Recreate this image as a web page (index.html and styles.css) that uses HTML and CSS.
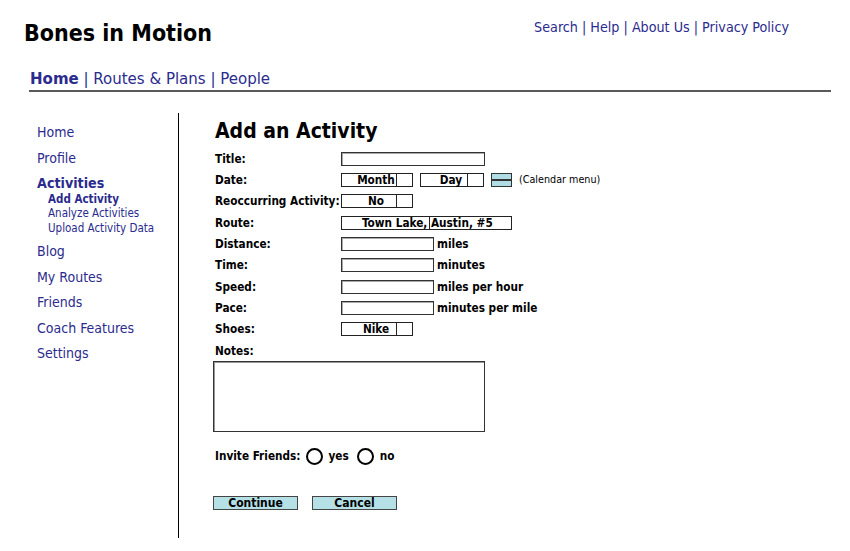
FILE: index.html
```html
<!DOCTYPE html>
<html>
<head>
<meta charset="utf-8">
<title>Bones in Motion</title>
<link rel="stylesheet" href="styles.css">
</head>
<body>
<header class="top">
  <div class="brand">Bones in Motion</div>
  <div class="util"><a>Search</a> | <a>Help</a> | <a>About Us</a> | <a>Privacy Policy</a></div>
</header>
<nav class="tabs"><a class="cur">Home</a> | <a>Routes &amp; Plans</a> | <a>People</a></nav>
<div class="rule"></div>
<div class="main">
  <aside class="side">
    <a class="item">Home</a>
    <a class="item">Profile</a>
    <a class="item cur">Activities</a>
    <div class="sub">
      <a class="cur">Add Activity</a>
      <a>Analyze Activities</a>
      <a>Upload Activity Data</a>
    </div>
    <a class="item">Blog</a>
    <a class="item">My Routes</a>
    <a class="item">Friends</a>
    <a class="item">Coach Features</a>
    <a class="item">Settings</a>
  </aside>
  <section class="content">
    <h1>Add an Activity</h1>
    <div class="form">
      <div class="lbl">Title:</div>
      <div class="ctl"><span class="inp wide"></span></div>

      <div class="lbl">Date:</div>
      <div class="ctl">
        <span class="select month"><span class="val">Month</span><span class="arr"></span></span>
        <span class="select day"><span class="val">Day</span><span class="arr"></span></span>
        <span class="cal"></span>
        <span class="note">(Calendar menu)</span>
      </div>

      <div class="lbl">Reoccurring Activity:</div>
      <div class="ctl"><span class="select small"><span class="val">No</span><span class="arr"></span></span></div>

      <div class="lbl">Route:</div>
      <div class="ctl"><span class="select route"><span class="val">Town Lake, Austin, #5</span><span class="arr"></span></span></div>

      <div class="lbl">Distance:</div>
      <div class="ctl"><span class="inp num"></span><span class="unit">miles</span></div>

      <div class="lbl">Time:</div>
      <div class="ctl"><span class="inp num"></span><span class="unit">minutes</span></div>

      <div class="lbl">Speed:</div>
      <div class="ctl"><span class="inp num"></span><span class="unit">miles per hour</span></div>

      <div class="lbl">Pace:</div>
      <div class="ctl"><span class="inp num"></span><span class="unit">minutes per mile</span></div>

      <div class="lbl">Shoes:</div>
      <div class="ctl"><span class="select small"><span class="val">Nike</span><span class="arr"></span></span></div>

      <div class="lbl">Notes:</div>
      <div class="ctl"></div>
    </div>
    <div class="notes"></div>
    <div class="invite">
      <span class="ilbl">Invite Friends:</span>
      <span class="radio"></span><span class="rtxt">yes</span>
      <span class="radio"></span><span class="rtxt">no</span>
    </div>
    <div class="buttons">
      <span class="btn">Continue</span>
      <span class="btn">Cancel</span>
    </div>
  </section>
</div>
</body>
</html>
```
FILE: styles.css
```css
body {
  margin: 0;
  background: #fff;
  color: #000;
  font-family: "DejaVu Sans Condensed", "DejaVu Sans", sans-serif;
}
a { color: #2b2b8e; text-decoration: none; }

.top {
  display: flex;
  justify-content: space-between;
  align-items: flex-start;
  padding: 17px 61px 0 24px;
}
.brand {
  margin-top: 2px;
  font-size: 23px;
  line-height: 28px;
  font-weight: bold;
}
.util {
  margin-top: 1px;
  font-size: 14.2px;
  line-height: 18px;
  color: #2b2b8e;
}

.tabs {
  margin: 21px 0 0 30px;
  font-size: 16.7px;
  line-height: 20px;
  color: #2b2b8e;
}
.tabs .cur { font-weight: bold; }

.rule {
  margin: 2px 19px 0 29px;
  border-top: 2px solid #5a5a5a;
}

.main {
  display: flex;
  margin-top: 21px;
}
.side {
  width: 141px;
  height: 418px;
  padding: 7px 0 0 37px;
  border-right: 1px solid #000;
  display: flex;
  flex-direction: column;
  font-size: 14px;
}
.side .item {
  line-height: 25.5px;
  height: 25.5px;
}
.side .item.cur { font-weight: bold; font-size: 14.2px; }
.sub {
  display: flex;
  flex-direction: column;
  margin: -5px 0 4px 11px;
  font-size: 11.5px;
}
.sub a { line-height: 14.5px; height: 14.5px; }
.sub a.cur { font-weight: bold; }

.content {
  padding-left: 34px;
  font-size: 11.7px;
}
h1 {
  margin: 5px 0 0 2px;
  font-size: 21px;
  line-height: 26px;
  font-weight: bold;
}
.form {
  margin-top: 4px;
  display: grid;
  grid-template-columns: 128px auto;
  grid-auto-rows: 21.33px;
  font-weight: bold;
}
.lbl {
  padding-left: 2px;
  display: flex;
  align-items: center;
  white-space: nowrap;
}
.ctl {
  display: flex;
  align-items: center;
}
.inp {
  display: inline-block;
  height: 12px;
  border: 1px solid #333;
  box-shadow: inset 1px 1px 0 #aaa;
  background: #fff;
  box-sizing: content-box;
}
.inp.wide { width: 142px; }
.inp.num { width: 91px; }
.unit { margin-left: 3px; }

.select {
  display: inline-flex;
  height: 12px;
  border: 1px solid #222;
  font-size: 11.7px;
  line-height: 12px;
}
.select .val {
  flex: 1;
  text-align: center;
  padding-left: 14px;
  border-right: 1px solid #222;
  white-space: nowrap;
}
.select .arr { width: 15px; }
.select.month { width: 70px; }
.select.day { width: 62px; margin-left: 7px; }
.select.small { width: 70px; }
.select.small .val { padding-left: 14px; }
.select.route { width: 169px; }
.select.route .val {
  flex: none;
  width: 88px;
  padding-left: 20px;
  box-sizing: border-box;
  text-align: left;
  overflow: visible;
}
.select.route .arr { flex: 1; }

.cal {
  display: inline-block;
  width: 19px;
  height: 12px;
  margin-left: 7px;
  border: 1px solid #333;
  background: linear-gradient(#b0dde3 0 5px, #333 5px 7px, #b0dde3 7px);
}
.note {
  margin-left: 7px;
  font-weight: normal;
  font-size: 10.7px;
}

.notes {
  width: 270px;
  height: 69px;
  border: 1px solid #333;
  box-shadow: inset 1px 1px 0 #999;
}

.invite {
  margin-top: 14px;
  height: 20px;
  display: flex;
  align-items: center;
  padding-left: 2px;
  font-weight: bold;
}
.radio {
  width: 13px;
  height: 13px;
  border: 2px solid #000;
  border-radius: 50%;
  margin-left: 5px;
}
.rtxt { margin-left: 6px; margin-right: 3px; }

.buttons {
  margin-top: 30px;
  display: flex;
  gap: 14px;
}
.btn {
  width: 83px;
  height: 12px;
  border: 1px solid #444;
  background: #b5e0e6;
  text-align: center;
  font-weight: bold;
  font-size: 12px;
  line-height: 13px;
}
```
